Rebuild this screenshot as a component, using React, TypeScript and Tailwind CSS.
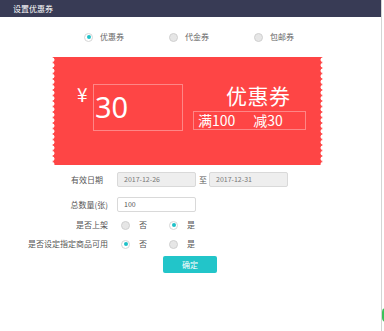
const Radio = ({ checked }: { checked?: boolean }) => (
  <span
    className={
      checked
        ? "flex h-[9px] w-[9px] shrink-0 items-center justify-center rounded-full border border-[#d6d6d6] bg-white"
        : "block h-[9px] w-[9px] shrink-0 rounded-full border border-[#d0d0d0] bg-[#e6e6e6]"
    }
  >
    {checked && <span className="block h-[4px] w-[4px] rounded-full bg-[#1fc1c8]" />}
  </span>
);

const TypeOption = ({ label, checked }: { label: string; checked?: boolean }) => (
  <div className="flex w-[85px] items-center gap-[7px]">
    <Radio checked={checked} />
    <span className="text-[8px] leading-[10px] text-[#666]">{label}</span>
  </div>
);

const Label = ({ children, className = "" }: { children: React.ReactNode; className?: string }) => (
  <div className={`w-[108px] shrink-0 text-right text-[8px] leading-[10px] text-[#555] ${className}`}>{children}</div>
);

const YesNo = ({ yes }: { yes: boolean }) => (
  <div className="ml-[13px] flex items-center">
    <div className="flex w-[48px] items-center gap-[9px]">
      <Radio checked={!yes} />
      <span className="text-[8px] leading-[10px] text-[#555]">否</span>
    </div>
    <div className="flex items-center gap-[9px]">
      <Radio checked={yes} />
      <span className="text-[8px] leading-[10px] text-[#555]">是</span>
    </div>
  </div>
);

const scallop =
  "absolute top-0 h-full w-[3px] bg-[length:3px_5.5px] bg-repeat-y";

export default function App() {
  return (
    <div className="relative flex h-[331px] w-[384px] overflow-hidden bg-white font-['Noto_Sans_CJK_SC','Noto_Sans',sans-serif]">
      <div className="h-full w-[382px] border-r border-[#d4d4d4]">
        <div className="h-[17px] bg-[#383b55] pl-[13px] text-[8px] leading-[17px] text-white">设置优惠券</div>

        <div className="mt-[15px] flex pl-[84px]">
          <TypeOption label="优惠券" checked />
          <TypeOption label="代金券" />
          <TypeOption label="包邮券" />
        </div>

        <div className="relative ml-[52px] mt-[15px] flex h-[108px] w-[271px] bg-[#fe4545] pl-[25px] pt-[27px] text-white">
          <div className={`${scallop} left-0 bg-[radial-gradient(circle_at_0_50%,#fff_2.2px,transparent_2.8px)]`} />
          <div className={`${scallop} right-0 bg-[radial-gradient(circle_at_100%_50%,#fff_2.2px,transparent_2.8px)]`} />

          <div className="w-[16px] text-[19px] leading-[19px]">¥</div>
          <div className="h-[47px] w-[90px] border border-white/35 pl-[1px] font-['Noto_Sans',sans-serif] text-[29px] leading-[44px]">
            30
          </div>
          <div className="ml-[10px] flex flex-col">
            <div className="pl-[33px] text-[21px] leading-[22px] tracking-[0.5px]">优惠券</div>
            <div className="mt-[5px] flex h-[19px] w-[113px] items-center border border-white/35 pl-[4px] text-[14px] leading-[17px]">
              <span>满100</span>
              <span className="ml-[18px]">减30</span>
            </div>
          </div>
        </div>

        <div className="mt-[7px] flex items-center">
          <Label className="pr-[5px]">有效日期</Label>
          <div className="ml-[9px] h-[15px] w-[79px] rounded-[2px] border border-[#d9d9d9] bg-[#eeeeee] pl-[6px] text-[7px] leading-[13px] text-[#777]">
            2017-12-26
          </div>
          <span className="ml-[3px] w-[10px] text-[8px] leading-[10px] text-[#555]">至</span>
          <div className="h-[15px] w-[79px] rounded-[2px] border border-[#d9d9d9] bg-[#eeeeee] pl-[6px] text-[7px] leading-[13px] text-[#777]">
            2017-12-31
          </div>
        </div>

        <div className="mt-[10px] flex items-center">
          <Label>总数量(张)</Label>
          <div className="ml-[9px] h-[15px] w-[79px] rounded-[2px] border border-[#d9d9d9] bg-white pl-[6px] text-[7px] leading-[13px] text-[#555]">
            100
          </div>
        </div>

        <div className="mt-[8px] flex items-center">
          <Label>是否上架</Label>
          <YesNo yes />
        </div>

        <div className="mt-[9px] flex items-center">
          <Label>是否设定指定商品可用</Label>
          <YesNo yes={false} />
        </div>

        <div className="ml-[163px] mt-[7px] flex h-[17px] w-[54px] items-center justify-center rounded-[2px] bg-[#22c5c9] text-[8px] text-white">
          确定
        </div>
      </div>

      <div className="absolute right-[-6px] top-[308px] h-[14px] w-[8px] rounded-full bg-[#3ac25a]" />
    </div>
  );
}
